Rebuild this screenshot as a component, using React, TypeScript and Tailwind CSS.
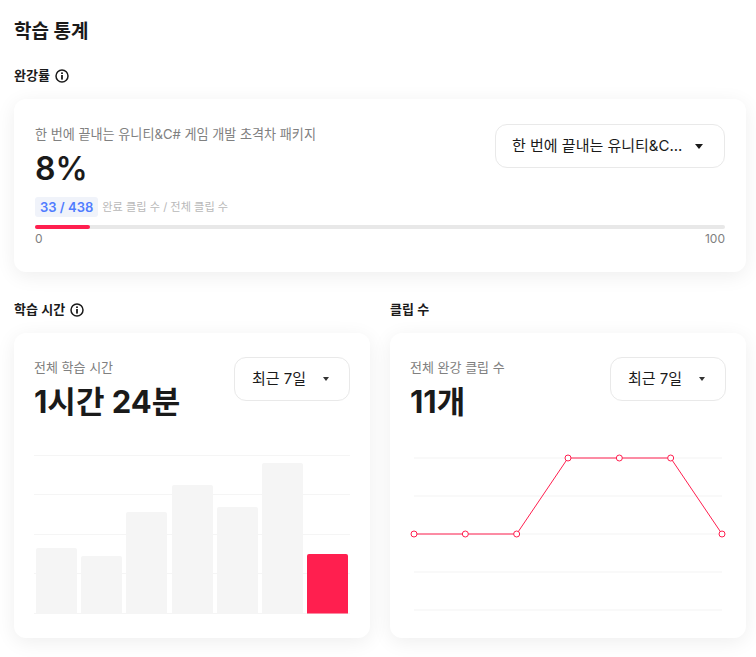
const BARS = [
  { x: 2, top: 548 },
  { x: 47, top: 556 },
  { x: 92, top: 512 },
  { x: 138, top: 485 },
  { x: 183, top: 507 },
  { x: 228, top: 463 },
];

const LINE_POINTS: [number, number][] = [
  [4, 104],
  [55.33, 104],
  [106.67, 104],
  [158, 28],
  [209.33, 28],
  [260.67, 28],
  [312, 104],
];

function InfoIcon() {
  return (
    <svg width="14" height="14" viewBox="0 0 14 14" fill="none" className="shrink-0">
      <circle cx="7" cy="7" r="6" stroke="#1a1a1a" strokeWidth="1.5" />
      <rect x="6.1" y="6" width="1.8" height="4.6" fill="#1a1a1a" />
      <rect x="6.1" y="3.4" width="1.8" height="1.6" fill="#1a1a1a" />
    </svg>
  );
}

function SelectBox({ label, className, small }: { label: string; className: string; small?: boolean }) {
  return (
    <div className={`flex h-11 items-center justify-between rounded-xl border border-[#e9e9e9] bg-white text-[15px] text-[#1a1a1a] ${className}`}>
      <span>{label}</span>
      {small ? (
        <svg width="6" height="4" viewBox="0 0 6 4" className="shrink-0">
          <path d="M0 0h6L3 4z" fill="#333" />
        </svg>
      ) : (
        <svg width="8" height="5" viewBox="0 0 8 5" className="shrink-0">
          <path d="M0 0h8L4 5z" fill="#1a1a1a" />
        </svg>
      )}
    </div>
  );
}

function BarChart() {
  return (
    <svg width="316" height="160" viewBox="0 0 316 160" className="mt-[33px] block">
      {[0, 39, 79, 118, 158].map((y) => (
        <rect key={y} x="0" y={y} width="316" height="1" fill="#f5f5f5" />
      ))}
      {BARS.map((b) => (
        <path
          key={b.x}
          d={`M${b.x} 158.5V${b.top - 455 + 2}q0-2 2-2h37q2 0 2 2V158.5z`}
          fill="#f5f5f5"
        />
      ))}
      <path d="M273 158.5V101q0-2 2-2h37q2 0 2 2V158.5z" fill="#ff1f4f" />
    </svg>
  );
}

function LineChart() {
  const line = LINE_POINTS.map(([x, y]) => `${x},${y}`).join(" ");
  return (
    <svg width="316" height="190" viewBox="0 0 316 190" className="mt-2 block">
      {[28, 66, 104, 142, 180].map((y) => (
        <line key={y} x1="4" x2="312" y1={y} y2={y} stroke="#f7f7f7" strokeWidth="1.5" />
      ))}
      <polyline points={line} fill="none" stroke="#ff1f4f" strokeWidth="1" />
      {LINE_POINTS.map(([x, y]) => (
        <circle key={x} cx={x} cy={y} r="3" fill="#fff" stroke="#ff1f4f" strokeWidth="1" />
      ))}
    </svg>
  );
}

export default function App() {
  return (
    <div className="min-h-[657px] overflow-hidden bg-white pt-5 pr-[10px] pl-[14px] font-['Inter','Noto_Sans_CJK_KR',sans-serif] text-[#1a1a1a]">
      <h1 className="text-[19px] leading-6 font-bold">학습 통계</h1>

      <div className="mt-[22px] flex h-5 items-center gap-[5px]">
        <h2 className="text-[13px] font-semibold">완강률</h2>
        <InfoIcon />
      </div>

      <section className="mt-[13px] h-[173px] rounded-xl bg-white px-[21px] pt-[25px] shadow-[0_4px_20px_rgba(0,0,0,0.07)]">
        <div className="flex items-start justify-between">
          <div>
            <p className="text-[13.1px] leading-5 text-[#808080]">한 번에 끝내는 유니티&C# 게임 개발 초격차 패키지</p>
            <p className="mt-[5px] text-[32px] leading-10 font-semibold">8%</p>
          </div>
          <SelectBox label="한 번에 끝내는 유니티&C..." className="w-[230px] pr-[21px] pl-[16px]" />
        </div>
        <div className="mt-2 flex items-center gap-[4px]">
          <span className="rounded-[3px] bg-[#f0f3fa] px-[5px] text-[13px] leading-5 font-semibold text-[#4f7cff]">33 / 438</span>
          <span className="text-[11.2px] text-[#b8b8b8]">완료 클립 수 / 전체 클립 수</span>
        </div>
        <div className="mt-[8px] h-1 rounded-full bg-[#e8e8e8]">
          <div className="h-1 w-[8%] rounded-full bg-[#ff1f4f]" />
        </div>
        <div className="mt-[2px] flex justify-between text-xs leading-4 text-[#808080]">
          <span>0</span>
          <span>100</span>
        </div>
      </section>

      <div className="mt-[28px] grid grid-cols-2 gap-5">
        <div>
          <div className="flex h-5 items-center gap-[5px]">
            <h2 className="text-[13px] font-semibold">학습 시간</h2>
            <InfoIcon />
          </div>
          <section className="mt-[13px] h-[305px] rounded-xl bg-white px-5 pt-6 shadow-[0_4px_20px_rgba(0,0,0,0.07)]">
            <div className="flex items-start justify-between">
              <div>
                <p className="text-[13px] leading-5 text-[#808080]">전체 학습 시간</p>
                <p className="mt-[5px] text-[31px] leading-10 font-bold">1시간 24분</p>
              </div>
              <SelectBox label="최근 7일" small className="w-[116px] pr-5 pl-[17px]" />
            </div>
            <BarChart />
          </section>
        </div>

        <div>
          <div className="flex h-5 items-center">
            <h2 className="text-[13px] font-semibold">클립 수</h2>
          </div>
          <section className="mt-[13px] h-[305px] rounded-xl bg-white px-5 pt-6 shadow-[0_4px_20px_rgba(0,0,0,0.07)]">
            <div className="flex items-start justify-between">
              <div>
                <p className="text-[13px] leading-5 text-[#808080]">전체 완강 클립 수</p>
                <p className="mt-[5px] text-[31px] leading-10 font-bold">11개</p>
              </div>
              <SelectBox label="최근 7일" small className="w-[116px] pr-5 pl-[17px]" />
            </div>
            <LineChart />
          </section>
        </div>
      </div>
    </div>
  );
}
